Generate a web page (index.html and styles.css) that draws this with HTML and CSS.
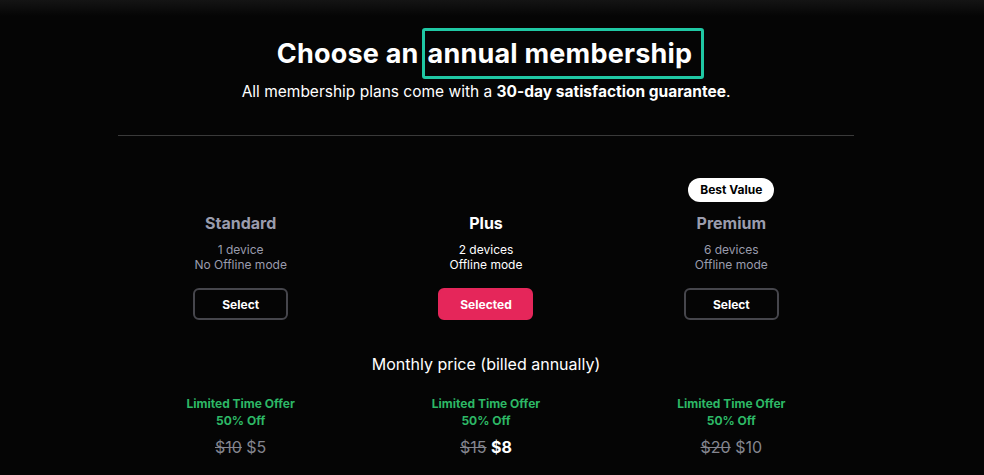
FILE: index.html
```html
<!DOCTYPE html>
<html lang="en">
<head>
<meta charset="utf-8">
<title>Choose an annual membership</title>
<link rel="stylesheet" href="styles.css">
</head>
<body>
<main class="page">
  <header class="intro">
    <h1 class="title">Choose an<span class="highlight">annual membership</span></h1>
    <p class="subtitle">All membership plans come with a <strong>30-day satisfaction guarantee</strong>.</p>
  </header>
  <hr class="rule">
  <section class="plans">
    <div class="plan">
      <div class="badge-slot"></div>
      <h2 class="plan-name">Standard</h2>
      <p class="plan-info">1 device<br>No Offline mode</p>
      <button class="btn">Select</button>
    </div>
    <div class="plan plan-active">
      <div class="badge-slot"></div>
      <h2 class="plan-name">Plus</h2>
      <p class="plan-info">2 devices<br>Offline mode</p>
      <button class="btn btn-selected">Selected</button>
    </div>
    <div class="plan">
      <div class="badge-slot"><span class="badge">Best Value</span></div>
      <h2 class="plan-name">Premium</h2>
      <p class="plan-info">6 devices<br>Offline mode</p>
      <button class="btn">Select</button>
    </div>
  </section>
  <h3 class="price-heading">Monthly price (billed annually)</h3>
  <section class="prices">
    <div class="price">
      <p class="offer">Limited Time Offer<br>50% Off</p>
      <p class="amount"><s class="old">$10</s> <span class="new">$5</span></p>
    </div>
    <div class="price price-active">
      <p class="offer">Limited Time Offer<br>50% Off</p>
      <p class="amount"><s class="old">$15</s> <span class="new">$8</span></p>
    </div>
    <div class="price">
      <p class="offer">Limited Time Offer<br>50% Off</p>
      <p class="amount"><s class="old">$20</s> <span class="new">$10</span></p>
    </div>
  </section>
</main>
</body>
</html>
```
FILE: styles.css
```css
* { box-sizing: border-box; }
html, body { height: 100%; }
body {
  margin: 0;
  padding-right: 12px;
  background: linear-gradient(#141414 0, #050505 16px) no-repeat, #050505;
  color: #fff;
  font-family: Inter, "Noto Sans", sans-serif;
  overflow: hidden;
}
.page {
  width: 736px;
  margin: 0 auto;
  padding-top: 28px;
}
.intro { text-align: center; }
.title {
  margin: 0;
  padding-left: 9px;
  font-size: 27px;
  font-weight: 700;
  line-height: 51px;
  height: 51px;
  letter-spacing: 0.2px;
}
.highlight {
  display: inline-block;
  vertical-align: top;
  margin-left: 3px;
  border: 3px solid #1fc8a4;
  border-radius: 3px;
  padding: 0 9px 0 3px;
  line-height: 45px;
}
.subtitle {
  margin: 2px 0 0;
  font-size: 15.5px;
  line-height: 22px;
}
.subtitle strong { font-weight: 700; }
.rule {
  margin: 32px 0 0;
  border: 0;
  border-top: 1px solid #3a3a3a;
  height: 0;
}
.plans {
  display: grid;
  grid-template-columns: repeat(3, 1fr);
  margin-top: 42px;
}
.plan {
  display: flex;
  flex-direction: column;
  align-items: center;
  text-align: center;
  color: #9a9cad;
}
.plan-active { color: #fff; }
.badge-slot { height: 24px; display: flex; align-items: center; }
.badge {
  background: #fff;
  color: #000;
  font-size: 12px;
  font-weight: 700;
  border-radius: 12px;
  padding: 0 12px;
  line-height: 24px;
}
.plan-name {
  margin: 11px 0 0;
  font-size: 16px;
  font-weight: 700;
  line-height: 20px;
}
.plan-info {
  margin: 9px 0 0;
  font-size: 12px;
  line-height: 15px;
}
.btn {
  margin-top: 16px;
  width: 95px;
  height: 32px;
  background: transparent;
  color: #fff;
  border: 2px solid #46464c;
  border-radius: 6px;
  font-family: inherit;
  font-size: 12px;
  font-weight: 700;
}
.btn-selected {
  background: #e5265a;
  border-color: #e5265a;
}
.price-heading {
  margin: 33px 0 0;
  text-align: center;
  font-size: 16px;
  font-weight: 400;
  line-height: 22px;
}
.prices {
  display: grid;
  grid-template-columns: repeat(3, 1fr);
  margin-top: 20px;
}
.price { text-align: center; }
.offer {
  margin: 0;
  color: #2db866;
  font-size: 12px;
  font-weight: 700;
  line-height: 17px;
}
.amount {
  margin: 8px 0 0;
  font-size: 16px;
  line-height: 20px;
  color: #84858f;
}
.old { color: #84858f; }
.new { color: #84858f; }
.price-active .new { color: #fff; font-weight: 700; }
```
